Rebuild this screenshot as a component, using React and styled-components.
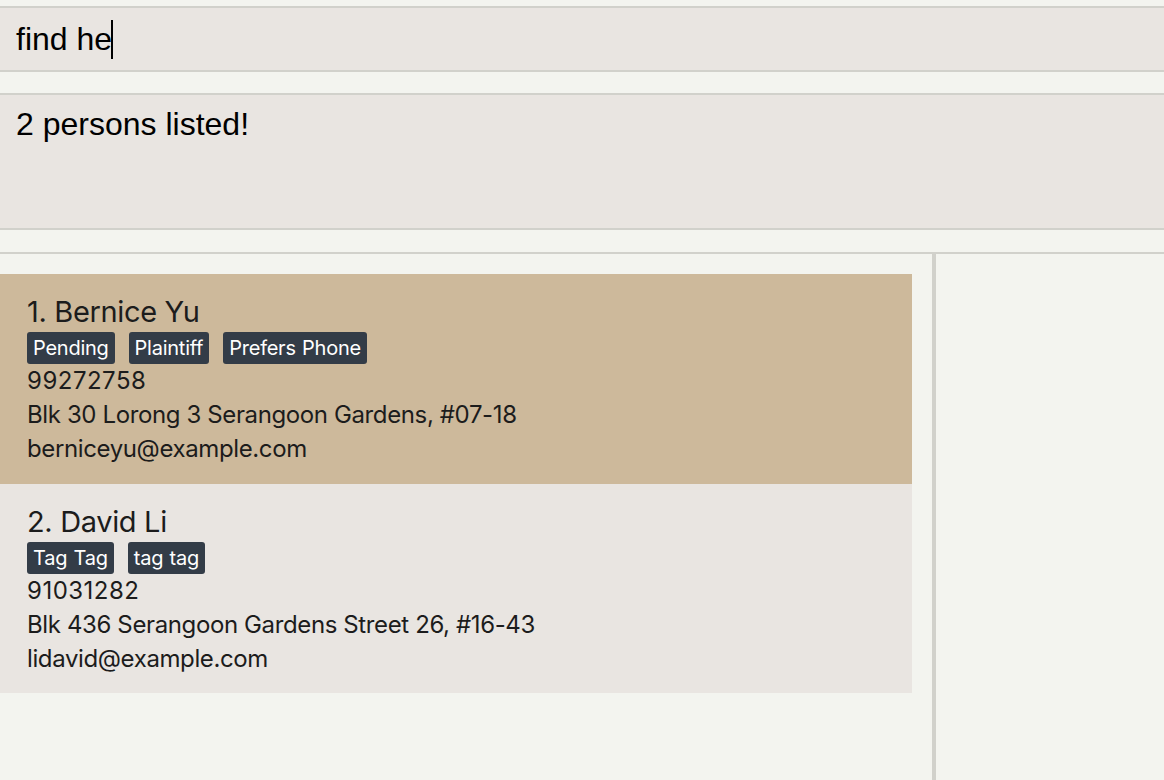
import React from "react";
import styled, { createGlobalStyle } from "styled-components";

const Global = createGlobalStyle`
  *, *::before, *::after { box-sizing: border-box; }
  html, body { margin: 0; padding: 0; background: #f3f4ef; }
  body { width: 1164px; height: 780px; overflow: hidden; }
  #root { height: 100%; }
`;

const Page = styled.div`
  height: 780px;
  display: flex;
  flex-direction: column;
  padding-top: 6px;
  background: #f3f4ef;
`;

const CommandBox = styled.div`
  height: 66px;
  border-top: 2px solid #d1d1cb;
  border-bottom: 2px solid #d1d1cb;
  background: #e9e5e1;
  display: flex;
  align-items: center;
  padding: 1px 16px 0;
  font-family: "Liberation Sans", Arial, sans-serif;
  font-size: 32px;
  color: #000;
`;

const Caret = styled.span`
  display: inline-block;
  width: 1.5px;
  height: 39px;
  background: #000;
  margin-left: -1px;
`;

const ResultBox = styled.div`
  margin-top: 21px;
  height: 137px;
  border-top: 2px solid #d1d1cb;
  border-bottom: 2px solid #d1d1cb;
  background: #e9e5e1;
  padding: 11px 16px 0;
  font-family: "Liberation Sans", Arial, sans-serif;
  font-size: 32px;
  color: #000;
`;

const Main = styled.div`
  margin-top: 22px;
  flex: 1;
  border-top: 2px solid #d1d1cb;
  display: flex;
  min-height: 0;
`;

const ListColumn = styled.div`
  width: 932px;
  padding: 20px 20px 0 0;
  display: flex;
  flex-direction: column;
`;

const Divider = styled.div`
  width: 4px;
  background: #d1d1cb;
`;

const SidePanel = styled.div`
  flex: 1;
`;

const Card = styled.div`
  background: ${(p) => (p.$selected ? "#cdb99b" : "#e9e5e1")};
  padding: 21px 27px 17px;
  height: ${(p) => p.$h}px;
  font-family: Inter, "Noto Sans", sans-serif;
  color: #1c1c1c;
`;

const Name = styled.div`
  font-size: 29px;
  line-height: 34px;
  letter-spacing: -0.35px;
`;

const Tags = styled.div`
  display: flex;
  gap: 14px;
  margin-top: 3px;
  height: 32px;
`;

const Tag = styled.span`
  background: #333c47;
  color: #fff;
  border-radius: 3px;
  font-size: 20px;
  line-height: 32px;
  height: 32px;
  padding: 0 6px;
  letter-spacing: -0.25px;
  word-spacing: 1px;
`;

const Detail = styled.div`
  font-size: 24px;
  line-height: 34px;
  letter-spacing: ${(p) => (p.$numeric ? "0.5px" : "-0.38px")};
`;

const persons = [
  {
    name: "Bernice Yu",
    tags: ["Pending", "Plaintiff", "Prefers Phone"],
    phone: "99272758",
    address: "Blk 30 Lorong 3 Serangoon Gardens, #07-18",
    email: "berniceyu@example.com",
    selected: true,
    h: 210,
  },
  {
    name: "David Li",
    tags: ["Tag Tag", "tag tag"],
    phone: "91031282",
    address: "Blk 436 Serangoon Gardens Street 26, #16-43",
    email: "lidavid@example.com",
    selected: false,
    h: 209,
  },
];

export default function App() {
  return (
    <>
      <Global />
      <Page>
        <CommandBox>
          <span>find he</span>
          <Caret />
        </CommandBox>
        <ResultBox>2 persons listed!</ResultBox>
        <Main>
          <ListColumn>
            {persons.map((p, i) => (
              <Card key={p.name} $selected={p.selected} $h={p.h}>
                <Name>
                  {i + 1}. {p.name}
                </Name>
                <Tags>
                  {p.tags.map((t) => (
                    <Tag key={t}>{t}</Tag>
                  ))}
                </Tags>
                <Detail $numeric>{p.phone}</Detail>
                <Detail>{p.address}</Detail>
                <Detail>{p.email}</Detail>
              </Card>
            ))}
          </ListColumn>
          <Divider />
          <SidePanel />
        </Main>
      </Page>
    </>
  );
}
